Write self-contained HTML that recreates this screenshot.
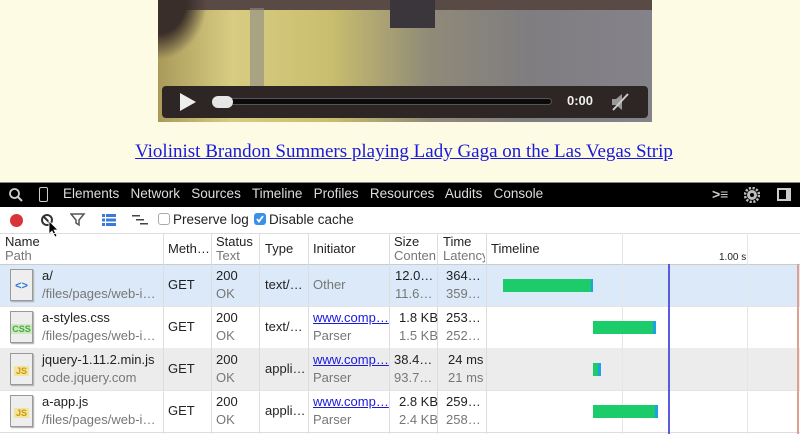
<!DOCTYPE html>
<html><head><meta charset="utf-8"><style>
*{margin:0;padding:0;box-sizing:border-box}
body{width:800px;height:434px;overflow:hidden;background:#fdfbe3;font-family:"Liberation Sans",sans-serif;position:relative}
.a{position:absolute}
.t{font-size:13px;color:#222;white-space:nowrap}
.g{color:#777}
.lnk{color:#1a1adb;text-decoration:underline}
.vl{position:absolute;width:1px;background:#ddd}
</style></head><body>
<div class="a" style="left:158px;top:0;width:494px;height:122px;background:linear-gradient(90deg,#a99a5a 0%,#d8cc82 15%,#c9bd6e 35%,#8f8a78 55%,#7f7d80 75%,#85838a 100%)"></div>
<div class="a" style="left:158px;top:0;width:494px;height:10px;background:#5a4a45"></div>
<div class="a" style="left:250px;top:8px;width:14px;height:85px;background:#8a8a86;opacity:.6"></div>
<div class="a" style="left:158px;top:0;width:50px;height:60px;background:radial-gradient(ellipse at 0 0,#3a2e2a 40%,transparent 70%)"></div>
<div class="a" style="left:390px;top:0;width:45px;height:28px;background:#3a363c"></div>
<div class="a" style="left:162px;top:86px;width:486px;height:32px;background:#2e2624;border-radius:4px"></div>
<svg class="a" style="left:178px;top:92px" width="20" height="20"><path d="M2 1 L18 10 L2 19 Z" fill="#eee"/></svg>
<div class="a" style="left:212px;top:98px;width:340px;height:7px;background:#0c0a0a;border-radius:4px;border:1px solid #555"></div>
<div class="a" style="left:212px;top:96px;width:21px;height:12px;background:#e6e6e6;border-radius:6px"></div>
<div class="a" style="left:567px;top:93px;font-size:13px;font-weight:bold;color:#eee">0:00</div>
<svg class="a" style="left:610px;top:92px" width="20" height="20"><path d="M2 7h4l6-5v16l-6-5H2z" fill="#999"/><path d="M3 18L18 2" stroke="#ccc" stroke-width="2"/></svg>
<div class="a lnk" style="left:0;width:808px;top:141px;text-align:center;font-family:'Liberation Serif',serif;font-size:19px">Violinist Brandon Summers playing Lady Gaga on the Las Vegas Strip</div>
<div class="a" style="left:0;top:182px;width:800px;height:1px;background:#888"></div>
<div class="a" style="left:0;top:183px;width:800px;height:24px;background:#000"></div>
<svg class="a" style="left:8px;top:187px" width="16" height="16"><circle cx="6.5" cy="6.5" r="4.5" stroke="#ccc" stroke-width="1.8" fill="none"/><path d="M10 10l4 4" stroke="#ccc" stroke-width="2"/></svg>
<div class="a" style="left:39px;top:187px;width:9px;height:15px;border:1.5px solid #ccc;border-radius:2px"></div>
<div class="a t" style="left:63px;top:186px;color:#ddd;font-size:13.5px">Elements&nbsp;&nbsp; Network&nbsp;&nbsp; Sources&nbsp;&nbsp; Timeline&nbsp;&nbsp; Profiles&nbsp;&nbsp; Resources&nbsp;&nbsp; Audits&nbsp;&nbsp; Console</div>
<div class="a t" style="left:712px;top:186px;color:#ccc;font-size:14px;font-weight:bold">&gt;≡</div>
<svg class="a" style="left:744px;top:187px" width="16" height="16"><circle cx="8" cy="8" r="5" fill="#bbb"/><circle cx="8" cy="8" r="7" fill="none" stroke="#bbb" stroke-width="2.5" stroke-dasharray="2.2 1.5"/><circle cx="8" cy="8" r="2" fill="#000"/></svg>
<div class="a" style="left:777px;top:188px;width:14px;height:13px;border:2px solid #ccc;border-right-width:5px"></div>
<div class="a" style="left:0;top:207px;width:800px;height:227px;background:#fff"></div>
<div class="a" style="left:10px;top:214px;width:13px;height:13px;border-radius:50%;background:#d9343a"></div>
<svg class="a" style="left:40px;top:213px" width="16" height="16"><circle cx="7" cy="7" r="5" stroke="#333" stroke-width="2" fill="none"/><path d="M3.5 3.5l7 7" stroke="#333" stroke-width="2"/></svg>
<svg class="a" style="left:48px;top:220px" width="12" height="18"><path d="M1 1v13l3-3 3 6 2-1-3-6h4z" fill="#000" stroke="#fff" stroke-width=".8"/></svg>
<svg class="a" style="left:70px;top:213px" width="16" height="14"><path d="M1 1h13l-5 6v5l-3-2V7z" fill="none" stroke="#555" stroke-width="1.5"/></svg>
<svg class="a" style="left:101px;top:213px" width="16" height="14"><g fill="#3b7ad8"><rect x="1" y="1" width="3" height="3"/><rect x="5" y="1" width="10" height="3"/><rect x="1" y="5.5" width="3" height="3"/><rect x="5" y="5.5" width="10" height="3"/><rect x="1" y="10" width="3" height="3"/><rect x="5" y="10" width="10" height="3"/></g></svg>
<svg class="a" style="left:131px;top:213px" width="18" height="14"><g fill="#444"><rect x="1" y="2" width="8" height="1.5"/><rect x="5" y="6" width="8" height="1.5"/><rect x="9" y="10" width="8" height="1.5"/></g></svg>
<div class="a" style="left:158px;top:213px;width:12px;height:12px;border:1px solid #aaa;border-radius:3px"></div>
<div class="a t" style="left:173px;top:212px;font-size:13.5px">Preserve log</div>
<div class="a" style="left:254px;top:213px;width:12px;height:12px;background:#3c8fe6;border-radius:3px"></div>
<svg class="a" style="left:255px;top:214px" width="10" height="10"><path d="M2 5l2 2.5L8 2" stroke="#fff" stroke-width="1.8" fill="none"/></svg>
<div class="a t" style="left:269px;top:212px;font-size:13.5px">Disable cache</div>
<div class="a" style="left:0;top:233px;width:800px;height:1px;background:#ddd"></div>
<div class="a" style="left:0;top:264px;width:800px;height:1px;background:#ccc"></div>
<div class="a t" style="left:5px;top:234px">Name</div><div class="a t g" style="left:5px;top:248px">Path</div>
<div class="a t" style="left:168px;top:241px">Meth…</div>
<div class="a t" style="left:216px;top:234px">Status</div><div class="a t g" style="left:216px;top:248px">Text</div>
<div class="a t" style="left:265px;top:241px">Type</div>
<div class="a t" style="left:313px;top:241px">Initiator</div>
<div class="a t" style="left:394px;top:234px">Size</div><div class="a t g" style="left:394px;top:248px;width:43px;overflow:hidden">Conten</div>
<div class="a t" style="left:443px;top:234px">Time</div><div class="a t g" style="left:443px;top:248px;width:42px;overflow:hidden">Latency</div>
<div class="a t" style="left:491px;top:241px">Timeline</div>
<div class="a t" style="left:719px;top:252px;font-size:10px">1.00 s</div>
<div class="a" style="left:0;top:265px;width:800px;height:41px;background:#dbe9f8"></div>
<div class="a" style="left:0;top:348px;width:800px;height:42px;background:#ececec"></div>
<div class="a" style="left:0;top:306px;width:800px;height:1px;background:#e4e4e4"></div>
<div class="a" style="left:0;top:390px;width:800px;height:1px;background:#e4e4e4"></div>
<div class="a" style="left:0;top:432px;width:800px;height:1px;background:#ddd"></div>
<div class="vl" style="left:163px;top:233px;height:201px"></div>
<div class="vl" style="left:211px;top:233px;height:201px"></div>
<div class="vl" style="left:259px;top:233px;height:201px"></div>
<div class="vl" style="left:308px;top:233px;height:201px"></div>
<div class="vl" style="left:389px;top:233px;height:201px"></div>
<div class="vl" style="left:437px;top:233px;height:201px"></div>
<div class="vl" style="left:486px;top:233px;height:201px"></div>
<div class="vl" style="left:622px;top:233px;height:201px;background:#e6e6e6"></div>
<div class="vl" style="left:747px;top:233px;height:201px;background:#e6e6e6"></div>
<div class="a" style="left:668px;top:264px;width:2px;height:170px;background:#5b5be0"></div>
<div class="a" style="left:797px;top:264px;width:2px;height:170px;background:#e0a090"></div>
<div class="a" style="left:10px;top:269px;width:23px;height:32px;background:#eee;border:1px solid #999;box-shadow:1px 1px 1px #aaa"><div style="margin-top:10px;text-align:center;font:bold 11px 'Liberation Sans';color:#2b7ad8">&lt;&gt;</div></div>
<div class="a" style="left:10px;top:311px;width:23px;height:32px;background:#eee;border:1px solid #999;box-shadow:1px 1px 1px #aaa"><div style="margin-top:12px;text-align:center;font:bold 9px 'Liberation Sans';color:#4a4;background:#cfe8c0">CSS</div></div>
<div class="a" style="left:10px;top:353px;width:23px;height:32px;background:#eee;border:1px solid #999;box-shadow:1px 1px 1px #aaa"><div style="margin:12px 3px 0;text-align:center;font:bold 9px 'Liberation Sans';color:#c90;background:#f3e3a0">JS</div></div>
<div class="a" style="left:10px;top:395px;width:23px;height:32px;background:#eee;border:1px solid #999;box-shadow:1px 1px 1px #aaa"><div style="margin:12px 3px 0;text-align:center;font:bold 9px 'Liberation Sans';color:#c90;background:#f3e3a0">JS</div></div>
<div class="a t" style="left:42px;top:268px">a/</div><div class="a t g" style="left:42px;top:286px">/files/pages/web-i…</div>
<div class="a t" style="left:168px;top:277px">GET</div>
<div class="a t" style="left:216px;top:268px">200</div><div class="a t g" style="left:216px;top:286px">OK</div>
<div class="a t" style="left:265px;top:277px">text/…</div>
<div class="a t g" style="left:313px;top:277px">Other</div>
<div class="a t" style="left:395px;top:268px">12.0…</div><div class="a t g" style="left:395px;top:286px">11.6…</div>
<div class="a t" style="left:446px;top:268px">364…</div><div class="a t g" style="left:446px;top:286px">359…</div>
<div class="a" style="left:503px;top:279px;width:90px;height:13px;background:#1ccb6a;border-right:2px solid #20a0e8"></div>
<div class="a t" style="left:42px;top:310px">a-styles.css</div><div class="a t g" style="left:42px;top:328px">/files/pages/web-i…</div>
<div class="a t" style="left:168px;top:319px">GET</div>
<div class="a t" style="left:216px;top:310px">200</div><div class="a t g" style="left:216px;top:328px">OK</div>
<div class="a t" style="left:265px;top:319px">text/…</div>
<div class="a t lnk" style="left:313px;top:310px">www.comp…</div><div class="a t g" style="left:313px;top:328px">Parser</div>
<div class="a t" style="left:399px;top:310px">1.8 KB</div><div class="a t g" style="left:399px;top:328px">1.5 KB</div>
<div class="a t" style="left:446px;top:310px">253…</div><div class="a t g" style="left:446px;top:328px">252…</div>
<div class="a" style="left:593px;top:321px;width:63px;height:13px;background:#1ccb6a;border-right:3px solid #20a0e8"></div>
<div class="a t" style="left:42px;top:352px">jquery-1.11.2.min.js</div><div class="a t g" style="left:42px;top:370px">code.jquery.com</div>
<div class="a t" style="left:168px;top:361px">GET</div>
<div class="a t" style="left:216px;top:352px">200</div><div class="a t g" style="left:216px;top:370px">OK</div>
<div class="a t" style="left:265px;top:361px">appli…</div>
<div class="a t lnk" style="left:313px;top:352px">www.comp…</div><div class="a t g" style="left:313px;top:370px">Parser</div>
<div class="a t" style="left:394px;top:352px">38.4…</div><div class="a t g" style="left:394px;top:370px">93.7…</div>
<div class="a t" style="left:448px;top:352px">24 ms</div><div class="a t g" style="left:448px;top:370px">21 ms</div>
<div class="a" style="left:593px;top:363px;width:8px;height:13px;background:#1ccb6a;border-right:3px solid #20a0e8"></div>
<div class="a t" style="left:42px;top:394px">a-app.js</div><div class="a t g" style="left:42px;top:412px">/files/pages/web-i…</div>
<div class="a t" style="left:168px;top:403px">GET</div>
<div class="a t" style="left:216px;top:394px">200</div><div class="a t g" style="left:216px;top:412px">OK</div>
<div class="a t" style="left:265px;top:403px">appli…</div>
<div class="a t lnk" style="left:313px;top:394px">www.comp…</div><div class="a t g" style="left:313px;top:412px">Parser</div>
<div class="a t" style="left:399px;top:394px">2.8 KB</div><div class="a t g" style="left:399px;top:412px">2.4 KB</div>
<div class="a t" style="left:446px;top:394px">259…</div><div class="a t g" style="left:446px;top:412px">258…</div>
<div class="a" style="left:593px;top:405px;width:65px;height:13px;background:#1ccb6a;border-right:3px solid #20a0e8"></div>
</body></html>
